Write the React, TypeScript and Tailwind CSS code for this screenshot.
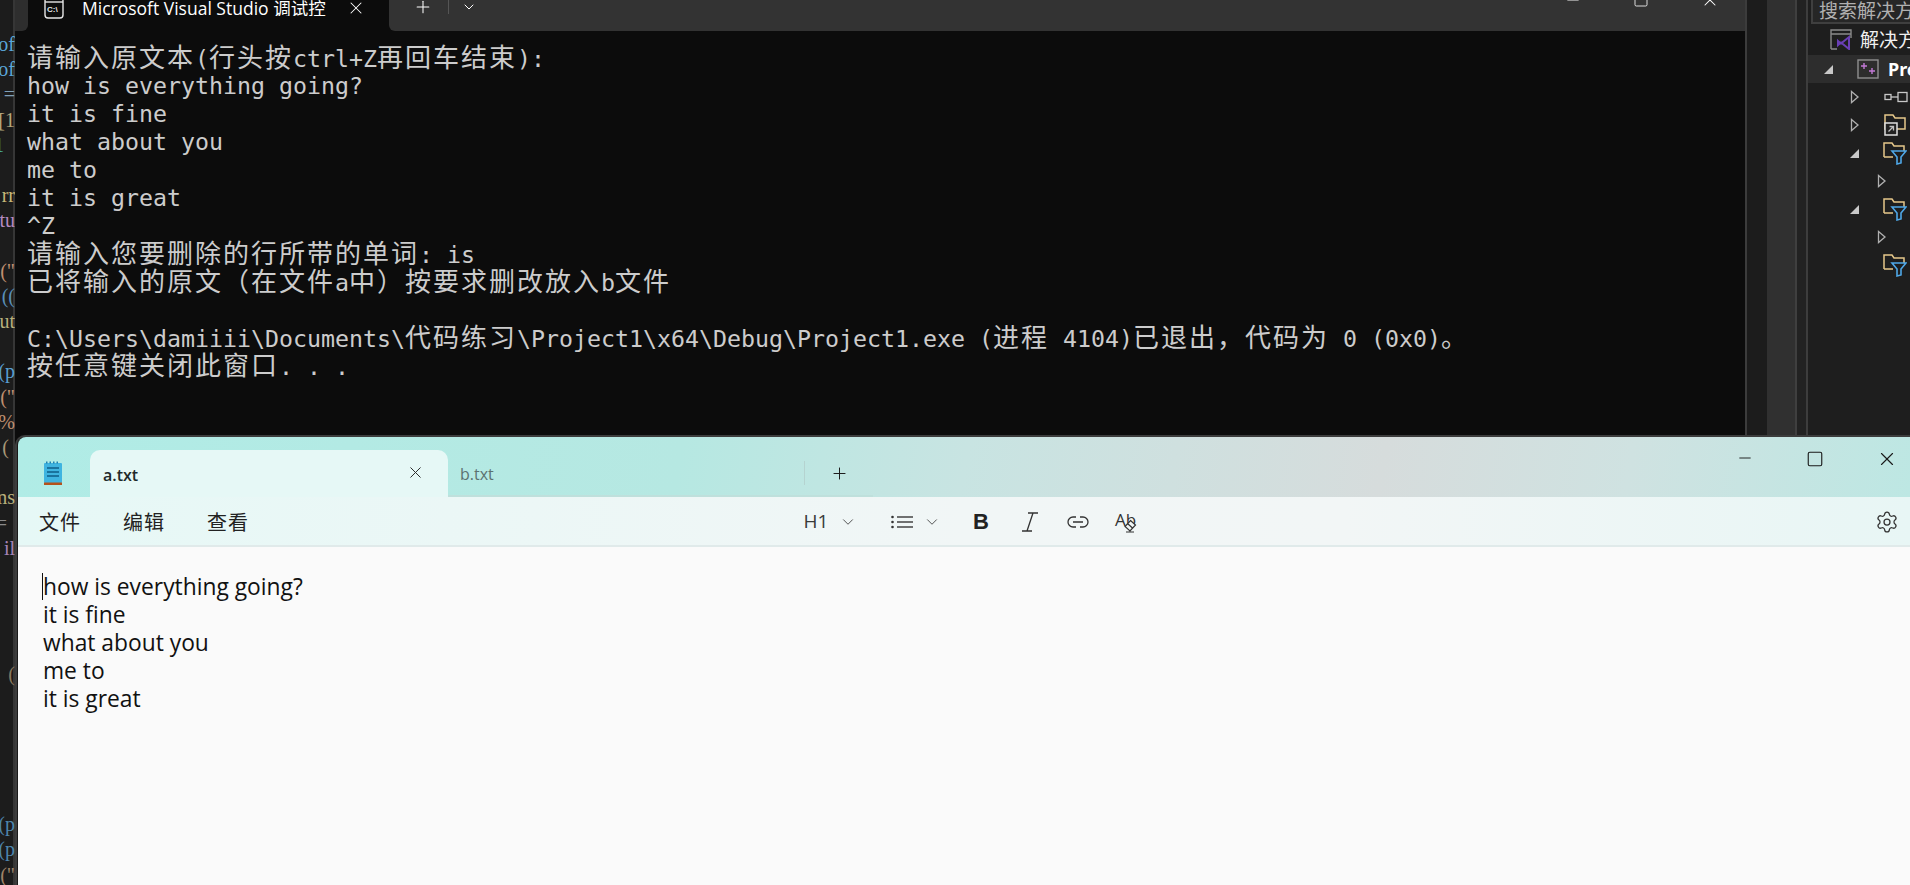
import { ChevronDown, Minus, Plus, Settings, Square, X } from 'lucide-react'

const CODE_LINES = [
	{ text: 'of', color: 'text-[#5aa6d8]' },
	{ text: 'of', color: 'text-[#5aa6d8]' },
	{ text: '=', color: 'text-[#7f9fb8]' },
	{ text: '[1', color: 'text-[#b5a67c]' },
	{ text: '1', color: 'text-[#4ec9b0]', indent: 'mr-[11px]' },
	{ text: '', color: '' },
	{ text: 'rr', color: 'text-[#c8b878]' },
	{ text: 'tu', color: 'text-[#b58ac0]' },
	{ text: '', color: '' },
	{ text: '("', color: 'text-[#c09070]' },
	{ text: '((', color: 'text-[#5a8fb8]' },
	{ text: 'ut', color: 'text-[#b8b07c]' },
	{ text: '', color: '' },
	{ text: '(p', color: 'text-[#5a9fd0]' },
	{ text: '("', color: 'text-[#c09070]' },
	{ text: '"%', color: 'text-[#c09070]' },
	{ text: '(', color: 'text-[#a89878]', indent: 'mr-[6px]' },
	{ text: '', color: '' },
	{ text: 'ms', color: 'text-[#b8b07c]' },
	{ text: '=', color: 'text-[#8a8a8a]', indent: 'mr-[8px]' },
	{ text: 'il', color: 'text-[#a884b8]' },
]

const CODE_LINES_BOTTOM = [
	{ text: '(', color: 'text-[#8a7a60]', top: 'mt-[101px]' },
	{ text: '(p', color: 'text-[#4f86ac]', top: 'mt-[125px]' },
	{ text: '(p', color: 'text-[#4f86ac]', top: 'mt-0' },
	{ text: '("', color: 'text-[#a08468]', top: 'mt-0' },
]

const TERMINAL_LINES = [
	'请输入原文本(行头按ctrl+Z再回车结束):',
	'how is everything going?',
	'it is fine',
	'what about you',
	'me to',
	'it is great',
	'^Z',
	'请输入您要删除的行所带的单词: is',
	'已将输入的原文（在文件a中）按要求删改放入b文件',
	'',
	'C:\\Users\\damiiii\\Documents\\代码练习\\Project1\\x64\\Debug\\Project1.exe (进程 4104)已退出，代码为 0 (0x0)。',
	'按任意键关闭此窗口. . .',
]

const NOTE_LINES = ['how is everything going?', 'it is fine', 'what about you', 'me to', 'it is great']

function TerminalLine({ text }: { text: string }) {
	// wide characters fill two console cells, so they get their own span
	const parts = text.split(/([\u3000-\u303f\u4e00-\u9fff\uff00-\uffef]+)/)
	return (
		<div className="h-[28px] whitespace-pre leading-[28px]">
			{parts.map((part, i) =>
				i % 2 === 1 ? (
					<span key={i} className="text-[26px] tracking-[2px]">
						{part}
					</span>
				) : (
					<span key={i}>{part}</span>
				),
			)}
		</div>
	)
}

function CodeStrip() {
	return (
		<div className="flex h-full w-[15px] shrink-0 flex-col overflow-hidden bg-[linear-gradient(90deg,#1c1c1c_13px,#363636_13px)] pt-[32px] font-['Liberation_Serif',serif] text-[20px] leading-[25.2px]">
			{CODE_LINES.map((line, i) => (
				<div key={i} className={`flex h-[25.2px] shrink-0 justify-end whitespace-pre ${line.color}`}>
					<span className={line.indent ?? ''}>{line.text}</span>
				</div>
			))}
			{CODE_LINES_BOTTOM.map((line, i) => (
				<div key={i} className={`flex h-[25.2px] shrink-0 justify-end whitespace-pre ${line.color} ${line.top}`}>
					<span>{line.text}</span>
				</div>
			))}
		</div>
	)
}

function TerminalWindow() {
	return (
		<div className="flex h-full w-[1732px] shrink-0 flex-col border-r-2 border-[#3c3c3c] bg-[#0c0c0c]">
			<div className="flex h-[31px] shrink-0 overflow-hidden bg-[#0c0c0c]">
				<div className="h-full w-[13px] shrink-0 rounded-br-[6px] bg-[#2e2e2e]" />
				<div className="flex h-[16px] w-[361px] shrink-0 items-center pl-[16px]">
					<svg width="20" height="22" viewBox="0 0 20 22" fill="none" className="shrink-0">
						<rect x="1" y="1" width="18" height="20" rx="3" stroke="#e6e6e6" strokeWidth="1.4" />
						<path d="M1 5h18" stroke="#e6e6e6" strokeWidth="1.4" />
						<text x="3" y="15" fill="#e6e6e6" fontSize="8" fontFamily="Liberation Sans" fontWeight="700">
							C:\
						</text>
					</svg>
					<span className="ml-[18px] w-[247px] shrink-0 overflow-hidden whitespace-nowrap font-['Open_Sans','Noto_Sans_CJK_SC',sans-serif] text-[17.5px] leading-[16px] text-white">
						Microsoft Visual Studio 调试控
					</span>
					<X size={20} strokeWidth={1.25} className="ml-[17px] shrink-0 text-white" />
				</div>
				<div className="flex h-full flex-1 rounded-bl-[6px] bg-[#333333] pl-[24px]">
					<div className="flex h-[14px] w-full items-center">
						<Plus size={20} strokeWidth={1.25} className="shrink-0 text-white" />
						<div className="ml-[15px] h-[14px] w-px shrink-0 bg-[#555555]" />
						<ChevronDown size={16} strokeWidth={1.5} className="ml-[12px] shrink-0 text-white" />
						<div className="ml-auto flex items-center">
							<Minus size={18} strokeWidth={1.25} className="mt-[-14px] shrink-0 text-white" />
							<Square size={16} strokeWidth={1.25} className="mt-[-14px] ml-[51px] shrink-0 text-white" />
							<X size={20} strokeWidth={1.25} className="mt-[-14px] mr-[25px] ml-[51px] shrink-0 text-white" />
						</div>
					</div>
				</div>
			</div>
			<div className="flex-1 pt-[13px] pl-[12px] font-['DejaVu_Sans_Mono','Noto_Sans_CJK_SC',monospace] text-[23.25px] text-[#cccccc]">
				{TERMINAL_LINES.map((line, i) => (
					<TerminalLine key={i} text={line} />
				))}
			</div>
		</div>
	)
}

function Triangle({ open, indent }: { open: boolean; indent: string }) {
	return (
		<svg width="11" height="14" viewBox="0 0 11 14" className={`shrink-0 ${indent}`}>
			{open ? (
				<path d="M1 12 L10 12 L10 3 Z" fill="#c8c8c8" />
			) : (
				<path d="M1.5 1.5 L8 7 L1.5 12.5 Z" fill="none" stroke="#b0b0b0" strokeWidth="1.3" />
			)}
		</svg>
	)
}

function FilterFolder() {
	return (
		<svg width="24" height="24" viewBox="0 0 24 24" fill="none" className="shrink-0">
			<path d="M1 16V2h8l2 3h10v6M1 16h9" stroke="#e6c88a" strokeWidth="1.5" />
			<path d="M9 10h14l-5 6v6l-4 1v-7z" fill="#1e1e1e" stroke="#4fa8e8" strokeWidth="1.6" />
		</svg>
	)
}

function SolutionRow({ children }: { children: React.ReactNode }) {
	return <div className="flex h-[28px] shrink-0 items-center">{children}</div>
}

function RightPanels() {
	return (
		<div className="flex h-full flex-1 bg-[#1e1e1e]">
			<div className="h-full w-[20px] shrink-0 bg-[#1c1c1c]" />
			<div className="h-full w-[28px] shrink-0 bg-[#303030]" />
			<div className="h-full w-[2px] shrink-0 bg-[#3f3f3f]" />
			<div className="h-full w-[9px] shrink-0 bg-[#222222]" />
			<div className="flex h-full flex-1 flex-col overflow-hidden border-l-2 border-[#3d3d3d]">
				<div className="ml-[3px] flex h-[24px] shrink-0 items-end overflow-hidden border-b-2 border-l-2 border-[#3f3f3f] bg-[#262626] pl-[6px]">
					<span className="whitespace-nowrap font-['Noto_Sans_CJK_SC',sans-serif] text-[19px] leading-[24px] text-[#b0b0b0]">搜索解决方案</span>
				</div>
				<div className="flex h-[31px] shrink-0 items-center pl-[22px]">
					<svg width="22" height="21" viewBox="0 0 22 21" fill="none" className="shrink-0">
						<path d="M1 20V1h20v8M1 5h20M1 20h6" stroke="#8a8a8a" strokeWidth="1.4" />
						<path d="M8 12l3 2.5 8-6.5v12l-8-6.500-3 2.500z" fill="#1e1e1e" stroke="#6a3fb5" strokeWidth="2" />
					</svg>
					<span className="ml-[8px] whitespace-nowrap font-['Noto_Sans_CJK_SC',sans-serif] text-[19px] text-[#f0f0f0]">解决方案</span>
				</div>
				<div className="flex h-[28px] shrink-0 items-center bg-[#2d2d2d] pl-[15px]">
					<Triangle open indent="" />
					<svg width="22" height="20" viewBox="0 0 22 20" fill="none" className="ml-[23px] shrink-0">
						<rect x="1" y="1" width="20" height="18" stroke="#8f8f8f" strokeWidth="1.4" />
						<path d="M4 7h6M7 4v6M12 12h6M15 9v6" stroke="#c27ad6" strokeWidth="1.4" />
					</svg>
					<span className="ml-[9px] font-['Noto_Sans',sans-serif] text-[18px] font-bold text-white">Project1</span>
				</div>
				<SolutionRow>
					<Triangle open={false} indent="ml-[42px]" />
					<svg width="24" height="12" viewBox="0 0 24 12" fill="none" className="ml-[23px] shrink-0">
						<rect x="1" y="3.5" width="6" height="5" stroke="#c8c8c8" strokeWidth="1.3" />
						<path d="M7 6h7" stroke="#c8c8c8" strokeWidth="1.3" />
						<rect x="14" y="1.5" width="9" height="9" stroke="#c8c8c8" strokeWidth="1.3" />
					</svg>
				</SolutionRow>
				<SolutionRow>
					<Triangle open={false} indent="ml-[42px]" />
					<div className="relative ml-[23px] h-[22px] w-[24px] shrink-0">
						<svg width="22" height="16" viewBox="0 0 22 16" fill="none">
							<path d="M1 15V1h8l2 3h10v11z" stroke="#e6c88a" strokeWidth="1.5" />
						</svg>
						<svg width="14" height="14" viewBox="0 0 14 14" fill="none" className="absolute bottom-0 left-0">
							<rect x="1" y="1" width="12" height="12" fill="#222222" stroke="#e0e0e0" strokeWidth="1.5" />
							<path d="M4.5 9.5l5-5M5.5 4.5h4v4" stroke="#c0c0c0" strokeWidth="1.3" />
						</svg>
					</div>
				</SolutionRow>
				<SolutionRow>
					<Triangle open indent="ml-[41px]" />
					<div className="ml-[23px]">
						<FilterFolder />
					</div>
				</SolutionRow>
				<SolutionRow>
					<Triangle open={false} indent="ml-[69px]" />
				</SolutionRow>
				<SolutionRow>
					<Triangle open indent="ml-[41px]" />
					<div className="ml-[23px]">
						<FilterFolder />
					</div>
				</SolutionRow>
				<SolutionRow>
					<Triangle open={false} indent="ml-[69px]" />
				</SolutionRow>
				<SolutionRow>
					<div className="ml-[75px]">
						<FilterFolder />
					</div>
				</SolutionRow>
			</div>
		</div>
	)
}

function NotepadWindow() {
	return (
		<div className="absolute top-[435px] right-0 bottom-0 left-[15px] flex flex-col rounded-tl-[10px] border-t-2 border-l-2 border-[#3c3c3c] bg-[#1a1a1a] pl-px">
			<div className="flex h-[60px] shrink-0 rounded-tl-[8px] bg-[linear-gradient(100deg,#b0ece6_0%,#b6e8e2_35%,#c8e4e2_50%,#d6dcdc_72%,#cfe2e1_85%,#bde7e3_100%)]">
				<div className="flex w-[72px] shrink-0 items-end justify-center pb-[12px]">
					<svg width="18" height="24" viewBox="0 0 18 24" className="ml-[-2px]">
						<rect x="0" y="2" width="18" height="20" rx="1" fill="#3fb4e0" />
						<path d="M2 0.5h1.5v2H2zM5.5 0.5H7v2H5.5zM9 0.5h1.5v2H9zM12.5 0.5H14v2h-1.5z" fill="#1c7fb0" />
						<path d="M3 7h12M3 11h12M3 15h12" stroke="#0f5d86" strokeWidth="1.6" />
						<rect x="0" y="21.5" width="18" height="2.5" fill="#b5521b" />
					</svg>
				</div>
				<div className="mt-[13px] flex h-[47px] w-[358px] shrink-0 items-center rounded-t-[10px] bg-[#e6f8f6] pr-[23px] pl-[13px]">
					<span className="mt-[2px] font-['Open_Sans',sans-serif] text-[16px] font-semibold text-[#1f2a2a]">a.txt</span>
					<X size={19} strokeWidth={1.25} className="mt-[-2px] ml-auto text-[#2a2a2a]" />
				</div>
				<div className="mt-[13px] flex h-[47px] w-[357px] shrink-0 items-center border-b-2 border-[#bfe0dc] pl-[12px]">
					<span className="mt-[2px] font-['Open_Sans',sans-serif] text-[16px] text-[#5c7270]">b.txt</span>
					<div className="ml-auto h-[24px] w-px bg-[#b5d3d0]" />
				</div>
				<div className="mt-[13px] flex h-[47px] w-[68px] shrink-0 items-center justify-center border-b-2 border-[#bfe0dc]">
					<Plus size={19} strokeWidth={1.25} className="mt-[2px] text-[#1a1a1a]" />
				</div>
				<div className="ml-auto flex h-full items-start pt-[13px] pr-[12px] text-[#1a1a1a]">
					<Minus size={18} strokeWidth={1.25} className="mt-[-1px]" />
					<Square size={18} strokeWidth={1.5} className="ml-[52px]" />
					<X size={22} strokeWidth={1.25} className="mt-[-2px] ml-[52px]" />
				</div>
			</div>
			<div className="flex h-[50px] shrink-0 items-center border-b-2 border-[#e0eaea] bg-[linear-gradient(90deg,#e6f8f6_0%,#f1f6f6_50%,#f2f6f6_70%,#e8f6f5_100%)] pt-[1px] text-[#2a2a2a]">
				<div className="flex gap-[42px] pl-[21px] font-['Noto_Sans_CJK_SC',sans-serif] text-[20px] tracking-[1px] text-[#222222]">
					<span>文件</span>
					<span>编辑</span>
					<span>查看</span>
				</div>
				<div className="ml-[556px] flex w-[22px] justify-center font-['Open_Sans',sans-serif] text-[19px] text-[#3a3a3a]">H1</div>
				<ChevronDown size={18} strokeWidth={1.25} className="ml-[12px] text-[#4a4a4a]" />
				<svg width="22" height="14" viewBox="0 0 22 14" fill="none" className="ml-[34px]">
					<circle cx="1.5" cy="2" r="1.3" fill="#333" />
					<circle cx="1.5" cy="7" r="1.3" fill="#333" />
					<circle cx="1.5" cy="12" r="1.3" fill="#333" />
					<path d="M6 2h16M6 7h16M6 12h16" stroke="#444" strokeWidth="1.3" />
				</svg>
				<ChevronDown size={18} strokeWidth={1.25} className="ml-[10px] text-[#4a4a4a]" />
				<span className="ml-[32px] font-['Liberation_Sans',sans-serif] text-[22px] leading-none font-bold text-[#222222]">B</span>
				<svg width="18" height="20" viewBox="0 0 18 20" fill="none" className="ml-[32px]">
					<path d="M7 1h10M1 19h10M12 1L6 19" stroke="#333" strokeWidth="1.3" />
				</svg>
				<svg width="22" height="12" viewBox="0 0 22 12" fill="none" className="ml-[28px]">
					<path d="M9 1H6a5 5 0 0 0 0 10h3M13 1h3a5 5 0 0 1 0 10h-3M6 6h10" stroke="#333" strokeWidth="1.3" />
				</svg>
				<div className="relative ml-[26px] h-[22px] w-[22px]">
					<span className="block font-['Open_Sans',sans-serif] text-[17px] leading-[18px] text-[#333333]">Ab</span>
					<svg width="14" height="14" viewBox="0 0 14 14" fill="#f1f6f6" className="absolute right-0 bottom-0">
						<path d="M7.5 1.5l5 4.5-5.5 6-5-4.5zM4.5 4.5l5 4.5M3 13h8" stroke="#333" strokeWidth="1.2" />
					</svg>
				</div>
				<Settings size={24} strokeWidth={1.25} className="mr-[11px] ml-auto text-[#333333]" />
			</div>
			<div className="relative flex-1 bg-[#fafafa] pt-[26px] pl-[25px] font-['Open_Sans',sans-serif] text-[22.8px] leading-[28px] text-[#111111]">
				<div className="absolute top-[26px] left-[24px] h-[27px] w-px bg-[#111111]" />
				{NOTE_LINES.map((line) => (
					<div key={line} className="h-[28px]">
						{line}
					</div>
				))}
			</div>
		</div>
	)
}

export default function App() {
	return (
		<div className="relative flex h-[885px] w-[1910px] overflow-hidden bg-[#1e1e1e]">
			<CodeStrip />
			<TerminalWindow />
			<RightPanels />
			<NotepadWindow />
		</div>
	)
}
